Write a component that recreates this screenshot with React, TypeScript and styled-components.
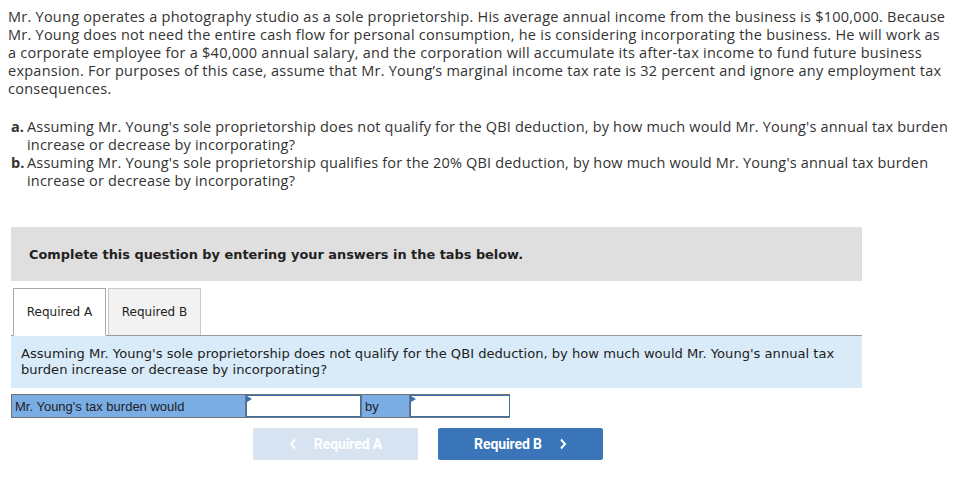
import React from "react";
import styled, { createGlobalStyle } from "styled-components";

const GlobalStyle = createGlobalStyle`
  html, body { margin: 0; padding: 0; background: #ffffff; }
  body { font-family: "Open Sans", "Liberation Sans", sans-serif; color: #333333; }
`;

const Page = styled.div`
  width: 970px;
  padding: 8px 12px 0 8px;
  box-sizing: border-box;
`;

const Intro = styled.p`
  margin: 0;
  font-family: "Open Sans", sans-serif;
  font-size: 14.5px;
  letter-spacing: 0.25px;
  line-height: 18px;
  color: #333333;
  white-space: nowrap;
`;

const Parts = styled.div`
  margin-top: 20px;
  display: flex;
  flex-direction: column;
`;

const Part = styled.div`
  display: grid;
  grid-template-columns: 16px 1fr;
  padding-left: 3px;
  font-family: "Open Sans", sans-serif;
  font-size: 14.5px;
  letter-spacing: 0.18px;
  line-height: 18px;
  color: #333333;
  white-space: nowrap;
`;

const Marker = styled.span`
  font-weight: 700;
  letter-spacing: 0;
`;

const Instruction = styled.div`
  margin: 37px 0 0 3px;
  width: 851px;
  height: 54px;
  box-sizing: border-box;
  padding-left: 18px;
  display: flex;
  align-items: center;
  background: #dfdfdf;
  font-family: "DejaVu Sans", Verdana, sans-serif;
  font-weight: 700;
  font-size: 12.9px;
  color: #222222;
`;

const TabBar = styled.div`
  margin: 7px 0 0 3px;
  width: 851px;
  display: flex;
  gap: 2px;
  padding-left: 2px;
  box-sizing: border-box;
  border-bottom: 1px solid #9a9a9a;
`;

const Tab = styled.div<{ $active?: boolean }>`
  width: 93px;
  box-sizing: border-box;
  display: flex;
  align-items: center;
  justify-content: center;
  font-family: "DejaVu Sans", Verdana, sans-serif;
  font-size: 12px;
  color: #222222;
  background: ${(p) => (p.$active ? "#ffffff" : "#f2f2f2")};
  border: 1px solid ${(p) => (p.$active ? "#a9a9a9" : "#c9c9c9")};
  border-bottom: ${(p) => (p.$active ? "1px solid #ffffff" : "none")};
  margin-bottom: ${(p) => (p.$active ? "-1px" : "0")};
  height: ${(p) => (p.$active ? "48px" : "47px")};
`;

const Prompt = styled.div`
  margin-left: 3px;
  width: 851px;
  box-sizing: border-box;
  padding: 10px 20px 10px 10px;
  background: #d9ebf9;
  font-family: "DejaVu Sans", Verdana, sans-serif;
  font-size: 13.1px;
  line-height: 16px;
  color: #222222;
`;

const AnswerRow = styled.div`
  margin: 6px 0 0 3px;
  display: flex;
  width: 499px;
  height: 24px;
  box-sizing: border-box;
  border: 1px solid #737373;
  background: #737373;
  gap: 1px;
`;

const LabelCell = styled.div<{ $w: number }>`
  width: ${(p) => p.$w}px;
  flex: none;
  background: #7aade3;
  display: flex;
  align-items: center;
  padding-left: 3px;
  box-sizing: border-box;
  font-family: "Liberation Sans", Arial, sans-serif;
  font-size: 13px;
  color: #1e1e1e;
`;

const InputCell = styled.div<{ $w: number }>`
  position: relative;
  width: ${(p) => p.$w}px;
  flex: none;
  background: #ffffff;
  border: 1px solid #3b6fb2;
  box-sizing: border-box;
`;

const Flag = styled.span`
  position: absolute;
  left: 0;
  top: 0;
  width: 0;
  height: 0;
  border-top: 3px solid transparent;
  border-bottom: 3px solid transparent;
  border-left: 5px solid #3b6fb2;
`;

const ButtonRow = styled.div`
  margin-top: 10px;
  padding-left: 245px;
  display: flex;
  gap: 20px;
`;

const NavButton = styled.div<{ $disabled?: boolean }>`
  width: 165px;
  height: 32px;
  border-radius: 2px;
  display: flex;
  align-items: center;
  justify-content: center;
  gap: 17px;
  background: ${(p) => (p.$disabled ? "#d7e3f1" : "#3a75b9")};
  color: #ffffff;
  font-family: "Roboto", sans-serif;
  font-weight: 700;
  font-size: 14px;
  letter-spacing: -0.1px;
`;

const Chevron = ({ dir }: { dir: "left" | "right" }) => (
  <svg width="8" height="12" viewBox="0 0 8 12">
    <polyline
      points={dir === "left" ? "6,1.5 2,6 6,10.5" : "2,1.5 6,6 2,10.5"}
      fill="none"
      stroke="#ffffff"
      strokeWidth="2"
    />
  </svg>
);

export default function App() {
  return (
    <>
      <GlobalStyle />
      <Page>
        <Intro>
          Mr. Young operates a photography studio as a sole proprietorship. His average annual income from the business is $100,000. Because
          <br />
          Mr. Young does not need the entire cash flow for personal consumption, he is considering incorporating the business. He will work as
          <br />
          a corporate employee for a $40,000 annual salary, and the corporation will accumulate its after-tax income to fund future business
          <br />
          expansion. For purposes of this case, assume that Mr. Young’s marginal income tax rate is 32 percent and ignore any employment tax
          <br />
          consequences.
        </Intro>
        <Parts>
          <Part>
            <Marker>a.</Marker>
            <span>
              Assuming Mr. Young's sole proprietorship does not qualify for the QBI deduction, by how much would Mr. Young's annual tax burden
              <br />
              increase or decrease by incorporating?
            </span>
          </Part>
          <Part>
            <Marker>b.</Marker>
            <span>
              Assuming Mr. Young's sole proprietorship qualifies for the 20% QBI deduction, by how much would Mr. Young's annual tax burden
              <br />
              increase or decrease by incorporating?
            </span>
          </Part>
        </Parts>
        <Instruction>Complete this question by entering your answers in the tabs below.</Instruction>
        <TabBar>
          <Tab $active>Required A</Tab>
          <Tab>Required B</Tab>
        </TabBar>
        <Prompt>
          Assuming Mr. Young's sole proprietorship does not qualify for the QBI deduction, by how much would
          Mr. Young's annual tax burden increase or decrease by incorporating?
        </Prompt>
        <AnswerRow>
          <LabelCell $w={233}>Mr. Young's tax burden would</LabelCell>
          <InputCell $w={115}>
            <Flag />
          </InputCell>
          <LabelCell $w={47}>by</LabelCell>
          <InputCell $w={100}>
            <Flag />
          </InputCell>
        </AnswerRow>
        <ButtonRow>
          <NavButton $disabled>
            <Chevron dir="left" />
            <span>Required A</span>
          </NavButton>
          <NavButton>
            <span>Required B</span>
            <Chevron dir="right" />
          </NavButton>
        </ButtonRow>
      </Page>
    </>
  );
}
